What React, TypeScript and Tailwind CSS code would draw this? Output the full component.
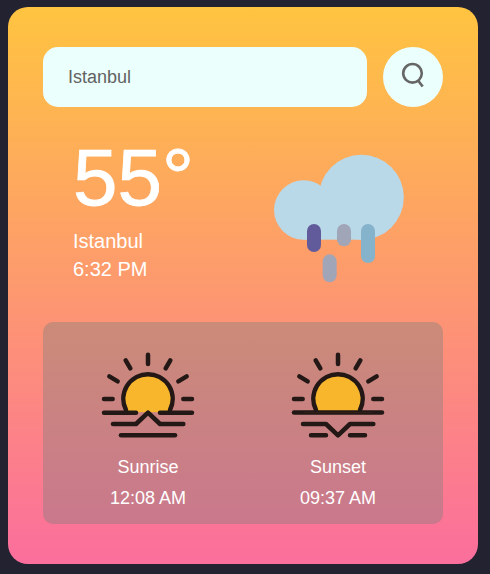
const rays = [
  'M174 44V72',
  'M107 61L121 85',
  'M241 61L227 85',
  'M58 109L83 124',
  'M290 109L265 124',
  'M42 177H68',
  'M280 177H306',
];

function SunIcon({ setting }: { setting?: boolean }) {
  return (
    <svg viewBox="24 0 300 330" className="block h-[110px] w-[100px]" fill="none" stroke="#231815" strokeWidth="13.500" strokeLinecap="round" strokeLinejoin="round">
      <path d={setting ? 'M110 217A74 74 0 1 1 238 217Z' : 'M110 217A74 74 0 1 1 238 217H204L174 216L144 217Z'} fill="#f8b62d" stroke="none" />
      <path d="M108 210A74 74 0 1 1 240 210" />
      {rays.map((d) => (
        <path key={d} d={d} />
      ))}
      {setting ? (
        <>
          <path d="M42 217.500H306" />
          <path d="M72 217.500H276" stroke="#51311d" strokeWidth="1" />
          <path d="M69 252H138L174 286L210 252H280" />
          <path d="M93 286H138M210 286H255" />
        </>
      ) : (
        <>
          <path d="M42 218H138M210 218H306" />
          <path d="M69 252H138L174 218L210 252H280" />
          <path d="M93 286H255" />
        </>
      )}
    </svg>
  );
}

function SunTime({ label, time, setting }: { label: string; time: string; setting?: boolean }) {
  return (
    <div className="flex w-[190px] flex-col items-center pt-[18px] text-[18px] leading-[21px] text-white">
      <SunIcon setting={setting} />
      <p className="mt-[7px]">{label}</p>
      <p className="mt-[10px]">{time}</p>
    </div>
  );
}

function RainCloud() {
  return (
    <svg viewBox="0 0 480 465" className="block h-[155px] w-[160px]">
      <g fill="#b9d9e8">
        <circle cx="131" cy="210" r="89" />
        <circle cx="304" cy="172" r="127.500" />
        <rect x="130" y="190" width="175" height="109" />
      </g>
      <rect x="141" y="252" width="42" height="84" rx="21" fill="#625b9b" />
      <rect x="231" y="252" width="42" height="67" rx="21" fill="#a1a5b8" />
      <rect x="303" y="252" width="42" height="117" rx="21" fill="#84b3cb" />
      <rect x="188" y="343" width="42" height="84" rx="21" fill="#a1a5b8" />
    </svg>
  );
}

export default function App() {
  return (
    <main className="h-[574px] w-[490px] bg-[#232231] pt-[7px] pl-[8px] font-['Liberation_Sans',Arial,sans-serif]">
      <section className="h-[557px] w-[470px] rounded-[20px] bg-linear-to-b/srgb from-[#ffc440] to-[#fb6e9d] px-[35px] pt-10">
        <div className="flex gap-4">
          <input
            type="text"
            defaultValue="Istanbul"
            aria-label="City"
            className="h-[60px] w-[324px] rounded-[15px] bg-[#ebfffc] px-[25px] text-[18px] text-[#626262] outline-none"
          />
          <button type="button" aria-label="Search" className="flex size-[60px] items-center justify-center rounded-full bg-[#ebfffc]">
            <svg viewBox="0 0 30 30" className="size-[30px]" fill="none" stroke="#666" strokeWidth="2.600">
              <circle cx="14.500" cy="11.300" r="9.300" />
              <path d="M20 18.500L24.700 24.500" strokeWidth="2.700" />
            </svg>
          </button>
        </div>
        <div className="flex h-[215px] justify-between pr-[23px] pl-[30px] text-white">
          <div className="pt-[25px]">
            <h1 className="text-[80px] leading-[92px] font-normal [-webkit-text-stroke:0.8px_white]">55°</h1>
            <p className="mt-[3px] text-[20px] leading-[28px]">Istanbul</p>
            <p className="text-[20px] leading-[28px]">6:32 PM</p>
          </div>
          <div className="pt-[33px]">
            <RainCloud />
          </div>
        </div>
        <div className="flex h-[202px] rounded-[10px] bg-[#808080]/40 px-[10px]">
          <SunTime label="Sunrise" time="12:08 AM" />
          <SunTime label="Sunset" time="09:37 AM" setting />
        </div>
      </section>
    </main>
  );
}
